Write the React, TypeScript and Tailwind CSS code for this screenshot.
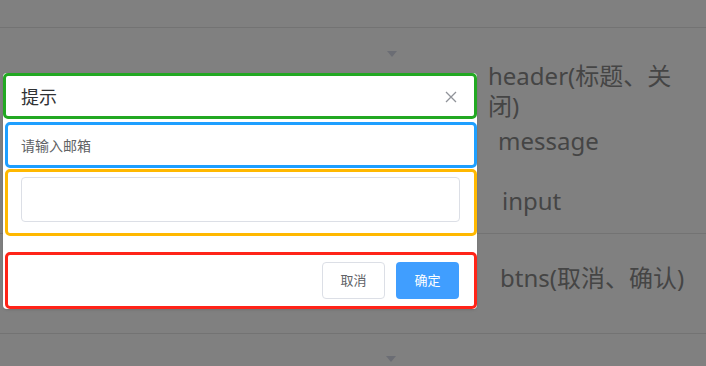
import React from 'react';

const font = { fontFamily: '"Noto Sans", "Noto Sans CJK SC", sans-serif' };

function Caret() {
  return <div className="w-0 h-0 border-l-[5px] border-r-[5px] border-t-[6px] border-l-transparent border-r-transparent border-t-[#6b6d74]" />;
}

export default function App() {
  return (
    <div className="relative w-[706px] h-[366px] overflow-hidden bg-[#808080]" style={font}>
      {/* background rows (dimmed by overlay) */}
      <div className="h-[28px] border-b border-[#737373]" />
      <div className="h-[206px] border-b border-[#737373] relative">
        <div className="pl-[387px] pt-[23px]">
          <Caret />
        </div>
        <div className="flex">
          <div className="w-[488px] pt-[138px]">
            <span className="block -ml-[7px] text-[13px] leading-none text-[#2f4f80]">f</span>
          </div>
          <div className="w-[200px] mt-[4px] text-[24px] leading-[30px] text-[#454545]">
            <p>header(标题、关闭)</p>
            <p className="mt-[5px] pl-[10px]">message</p>
            <p className="mt-[30px] pl-[14px]">input</p>
          </div>
        </div>
      </div>
      <div className="h-[100px] border-b border-[#737373] flex items-center">
        <span className="-ml-[7px] mt-[-8px] w-[507px] text-[13px] text-[#2f4f80]">f</span>
        <span className="-mt-[12px] text-[24px] leading-[30px] text-[#454545] whitespace-nowrap">btns(取消、确认)</span>
      </div>
      <div className="pl-[386px] pt-[22px]">
        <Caret />
      </div>

      {/* dialog */}
      <div className="absolute left-[3px] top-[73px] w-[474px] h-[236px] bg-white rounded-[4px] shadow-sm">
        <div className="h-[46px] border-[3px] border-[#22a822] rounded-[5px] flex items-center justify-between pl-[15px] pr-[17px]">
          <span className="text-[18px] text-[#303133] pt-[2px]">提示</span>
          <svg width="12" height="12" viewBox="0 0 12 12" className="mt-[2px]">
            <path d="M1 1L11 11M11 1L1 11" stroke="#909399" strokeWidth="1.3" />
          </svg>
        </div>
        <div className="ml-[2px] mt-[3px] h-[46px] border-[3px] border-[#1e9fff] rounded-[5px] flex items-center pl-[13px]">
          <span className="text-[14px] text-[#606266] pt-[1px]">请输入邮箱</span>
        </div>
        <div className="ml-[2px] mt-[1px] h-[67px] border-[3px] border-[#ffb800] rounded-[5px] pl-[13px] pr-[14px] pt-[5px]">
          <div className="h-[45px] border border-[#dcdfe6] rounded-[4px]" />
        </div>
        <div className="ml-[2px] mt-[16px] h-[57px] border-[3px] border-[#ff2418] rounded-[5px] flex items-center justify-end gap-[11px] pr-[15px]">
          <button className="w-[63px] h-[37px] border border-[#dcdfe6] rounded-[4px] text-[13px] text-[#606266] bg-white">取消</button>
          <button className="w-[63px] h-[37px] rounded-[4px] text-[13px] text-white bg-[#409eff]">确定</button>
        </div>
      </div>
    </div>
  );
}
